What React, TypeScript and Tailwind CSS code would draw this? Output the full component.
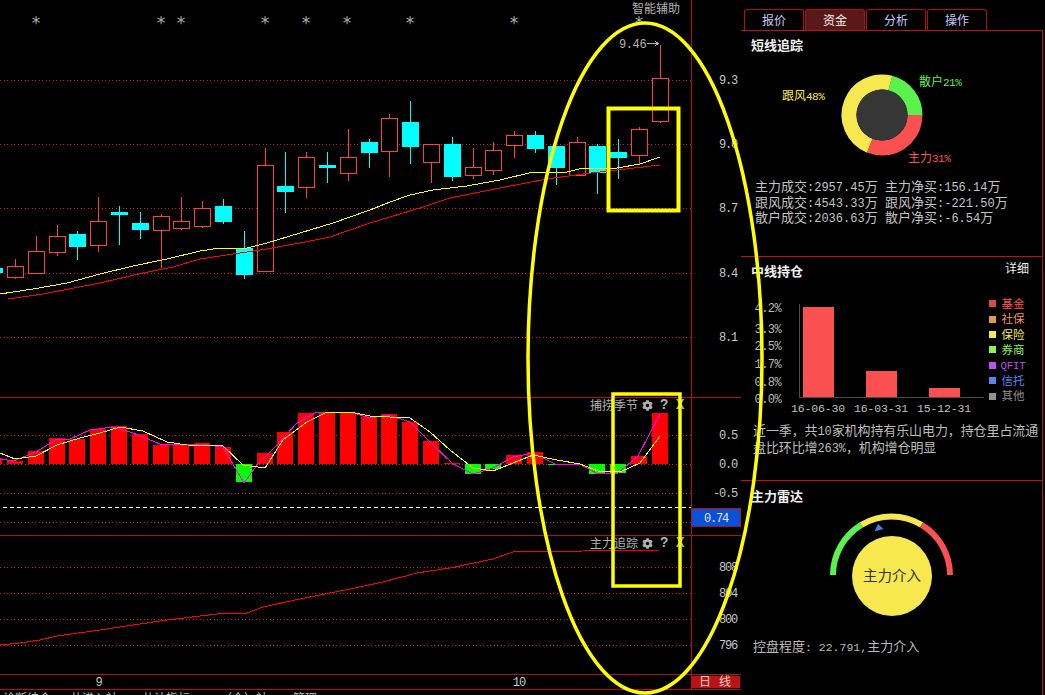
import { FaCog } from "react-icons/fa"

const cjk = "font-['Noto_Sans_CJK_SC',sans-serif]"
const mono = "font-['Liberation_Mono',monospace]"

const LINE = "#b01212"
const DOT = "#d02020"
const UP = "#ff4040"
const DOWN = "#00ffff"

type Candle = [number, "r" | "c", number, number, number, number]

// x, colour, high, body top, body bottom, low
const candles: Candle[] = [
  [-5.5, "c", 262, 268, 273, 275],
  [15.5, "r", 259, 266, 277, 279],
  [36.5, "r", 236, 251, 273, 273],
  [57.5, "r", 225, 236, 252, 256],
  [77.5, "c", 231, 234, 247, 260],
  [98.5, "r", 197, 221, 245, 252],
  [119.5, "c", 206, 212, 215, 245],
  [140.5, "c", 212, 223, 230, 239],
  [161.5, "r", 214, 216, 230, 268],
  [181.5, "r", 197, 221, 228, 230],
  [202.5, "r", 201, 208, 226, 228],
  [223.5, "c", 199, 206, 222, 224],
  [244.5, "c", 231, 248, 275, 279],
  [265.5, "r", 148, 165, 271, 271],
  [285.5, "c", 152, 186, 192, 213],
  [306.5, "r", 152, 157, 187, 198],
  [327.5, "c", 152, 165, 168, 183],
  [348.5, "r", 129, 157, 173, 181],
  [369.5, "c", 139, 142, 153, 168],
  [389.5, "r", 114, 118, 151, 177],
  [410.5, "c", 101, 122, 147, 164],
  [431.5, "r", 144, 144, 162, 183],
  [452.5, "c", 137, 144, 177, 181],
  [473.5, "r", 148, 167, 175, 179],
  [493.5, "r", 142, 150, 170, 175],
  [514.5, "r", 131, 135, 145, 158],
  [535.5, "c", 131, 135, 149, 153],
  [556.5, "c", 146, 146, 168, 185],
  [577.5, "r", 137, 142, 175, 175],
  [597.5, "c", 144, 146, 173, 194],
  [618.5, "c", 139, 152, 158, 179],
  [639.5, "r", 127, 129, 155, 164],
  [660.5, "r", 45, 78, 121, 123],
]

const barTops = [
  458, 461, 451, 438, 439, 429, 426, 434, 445, 445, 443, 447, 482, 453, 432, 413, 412, 412, 417, 414, 422, 441, 463,
  474, 469, 455, 452, 465, 464, 474, 473, 456, 413,
]

const stars = [36, 161, 181, 265, 306, 347, 410, 514, 639]

const maYellow =
  "0,294 33,289 67,283 100,274 133,266 167,259 200,251 220,248 233,248 247,248 267,243 300,233 333,223 350,217 370,210 390,202 410,195 433,190 467,186 500,180 533,172 567,172 583,168 617,168 640,164 660,157"
const maRed =
  "8,299 43,294 100,283 143,273 173,267 200,259 233,254 267,249 300,243 330,237 350,230 370,223 390,217 423,207 450,198 500,188 547,179 583,174 617,170 660,165"
const macdPink =
  "0,459 13,461 36,452 57,439 70,439 90,430 113,427 133,433 160,444 180,445 200,444 223,447 244,483 257,465 277,445 297,423 315,413 350,412 370,418 388,415 410,422 433,445 453,464 473,474 493,468 513,457 533,453 557,465 580,464 598,474 618,473 638,456 660,414"
const macdYellow =
  "0,453 15,459 36,456 57,445 80,438 100,433 120,427 143,431 167,442 187,445 223,446 243,465 265,468 283,440 307,422 325,413 350,412 370,416 390,417 410,418 430,432 450,450 473,468 493,471 533,455 557,460 580,464 598,471 620,472 640,463 660,436"
const trackLine =
  "0,645 20,643 40,640 57,636 100,630 133,625 167,620 217,614 247,613 263,607 300,599 350,589 383,582 417,573 450,568 493,559 513,552 583,551 660,550"

function Dotted({ y, to = 691 }: { y: number; to?: number }) {
  return <line x1={0} x2={to} y1={y + 0.5} y2={y + 0.5} stroke={DOT} strokeDasharray="1 2.5" />
}

function AxisLabel({ y, children }: { y: number; children: string }) {
  return (
    <text x={737} y={y + 4} textAnchor="end" fontSize={12} letterSpacing={-1.2} fill="#c8c8c8" className={mono}>
      {children}
    </text>
  )
}

function AxisLine({ from, to }: { from: number; to: number }) {
  return <line x1={691.5} x2={691.5} y1={from} y2={to} stroke={LINE} />
}

function CandleMark({ c }: { c: Candle }) {
  const [x, kind, high, top, bottom, low] = c
  const color = kind === "r" ? UP : DOWN
  return (
    <g>
      <line x1={x} x2={x} y1={high} y2={top} stroke={color} />
      <line x1={x} x2={x} y1={bottom} y2={low} stroke={color} />
      {kind === "r" ? (
        <rect x={x - 8} y={top + 0.5} width={16} height={bottom - top} fill="#000" stroke={color} />
      ) : (
        <rect x={x - 8.5} y={top} width={17} height={bottom - top} fill={color} />
      )}
    </g>
  )
}

function PriceChart() {
  return (
    <svg viewBox="0 0 741 397" className="block w-[741px] h-[397px]" shapeRendering="crispEdges">
      <AxisLine from={0} to={397} />
      {[80, 144, 208, 273, 337].map((y) => (
        <Dotted key={y} y={y} />
      ))}
      {candles.map((c) => (
        <CandleMark key={c[0]} c={c} />
      ))}
      <polyline points={maYellow} fill="none" stroke="#ffff00" />
      <polyline points={maRed} fill="none" stroke="#ff0000" />
      {stars.map((x) => (
        <text
          key={x}
          x={x}
          y={29}
          textAnchor="middle"
          fontSize={17}
          fill="#a8a8a8"
          className="font-['DejaVu_Sans',sans-serif]"
        >
          *
        </text>
      ))}
      <text x={632} y={13} fontSize={12} fill="#b4b4b4" className={cjk}>
        智能辅助
      </text>
      <text x={619} y={48} fontSize={12} letterSpacing={-0.4} fill="#b4b4b4" className={mono}>
        9.46
      </text>
      <path d="M647 43.5H658M655 41L658 43.5L655 46" fill="none" stroke="#b4b4b4" />
      <AxisLabel y={80}>9.3</AxisLabel>
      <AxisLabel y={144}>9.0</AxisLabel>
      <AxisLabel y={208}>8.7</AxisLabel>
      <AxisLabel y={273}>8.4</AxisLabel>
      <AxisLabel y={337}>8.1</AxisLabel>
    </svg>
  )
}

function IndicatorTools({ title }: { title: string }) {
  return (
    <div className={`absolute left-[590px] top-[0px] flex items-center h-[14px] text-[12px] text-[#b0b0b0] ${cjk}`}>
      <span className="w-[52px]">{title}</span>
      <FaCog className="w-[11px] h-[11px] text-[#b0b0b0]" />
      <span className={`ml-[7px] w-[9px] font-bold text-[14px] ${mono}`}>?</span>
      <span className={`ml-[7px] font-bold text-[14px] ${mono}`}>X</span>
    </div>
  )
}

function SeasonChart() {
  return (
    <svg viewBox="0 398 741 137" className="block w-[741px] h-[137px]" shapeRendering="crispEdges">
      <AxisLine from={398} to={535} />
      {[435, 464, 493, 522].map((y) => (
        <Dotted key={y} y={y} />
      ))}
      {candles.map((c, i) => {
        const top = barTops[i]
        const x = Math.floor(c[0] - 8.5)
        return top <= 464 ? (
          <rect key={c[0]} x={x} y={top} width={16} height={464 - top} fill="#ff0000" />
        ) : (
          <rect key={c[0]} x={x} y={464} width={16} height={top - 464} fill="#00ff00" />
        )
      })}
      <polyline points={macdPink} fill="none" stroke="#ff00ff" />
      <polyline points={macdYellow} fill="none" stroke="#ffff00" />
      <line x1={3} x2={691} y1={507.5} y2={507.5} stroke="#ffffff" strokeDasharray="4 3" />
      <rect x={691.5} y={508.5} width={49} height={18} fill="#0a50d8" stroke={LINE} />
      <text x={716} y={522} textAnchor="middle" fontSize={12} letterSpacing={-1.2} fill="#e8e8e8" className={mono}>
        0.74
      </text>
      <AxisLabel y={435}>0.5</AxisLabel>
      <AxisLabel y={464}>0.0</AxisLabel>
      <AxisLabel y={493}>-0.5</AxisLabel>
    </svg>
  )
}

function TrackChart() {
  return (
    <svg viewBox="0 536 741 138" className="block w-[741px] h-[138px]" shapeRendering="crispEdges">
      <AxisLine from={536} to={674} />
      {[567, 593, 619, 645].map((y) => (
        <Dotted key={y} y={y} />
      ))}
      <polyline points={trackLine} fill="none" stroke="#ff0000" />
      <AxisLabel y={567}>808</AxisLabel>
      <AxisLabel y={593}>804</AxisLabel>
      <AxisLabel y={619}>800</AxisLabel>
      <AxisLabel y={645}>796</AxisLabel>
    </svg>
  )
}

function TimeAxis() {
  return (
    <svg viewBox="0 675 741 14" className="block w-[741px] h-[14px]" shapeRendering="crispEdges">
      <AxisLine from={675} to={689} />
      <text x={99} y={686} textAnchor="middle" fontSize={12} fill="#c8c8c8" className={mono}>
        9
      </text>
      <text x={519} y={686} textAnchor="middle" fontSize={12} letterSpacing={-1} fill="#c8c8c8" className={mono}>
        10
      </text>
      <rect x={692} y={676} width={48} height={12} fill="#b81414" />
      <text x={699} y={686} fontSize={12} fill="#f0d0d0" className={cjk}>
        日
      </text>
      <text x={719} y={686} fontSize={12} fill="#f0d0d0" className={cjk}>
        线
      </text>
    </svg>
  )
}

function Mixed({ text, latin = "text-[12px]" }: { text: string; latin?: string }) {
  return (
    <>
      {text.split(/([ -~]+)/).map((part, i) =>
        i % 2 === 1 ? (
          <span key={i} className={`${mono} ${latin}`}>
            {part}
          </span>
        ) : (
          part
        ),
      )}
    </>
  )
}

function Percent({ value }: { value: string }) {
  return (
    <tspan fontSize={11} letterSpacing={-0.5} className={mono}>
      {value}
    </tspan>
  )
}

function Donut() {
  const cx = 882
  const cy = 115
  const r = 33
  const c = 2 * Math.PI * r
  // yellow, green, red shares as stroke segments, starting from the top
  const slices = [
    { color: "#f6e84e", from: 201.6, span: 172.8 },
    { color: "#5cf24e", from: 14.4, span: 75.6 },
    { color: "#fa5050", from: 90, span: 111.6 },
  ]
  return (
    <svg viewBox="741 53 301 125" className="block w-[301px] h-[125px]">
      {slices.map((s) => (
        <circle
          key={s.color}
          cx={cx}
          cy={cy}
          r={r}
          fill="none"
          stroke={s.color}
          strokeWidth={15}
          strokeDasharray={`${(s.span / 360) * c} ${c}`}
          transform={`rotate(${s.from - 90} ${cx} ${cy})`}
        />
      ))}
      <circle cx={cx} cy={cy} r={25.5} fill="#363636" />
      <text x={782} y={100} fontSize={12} fill="#f6e84e" className={cjk}>
        跟风
        <Percent value="48%" />
      </text>
      <text x={919} y={86} fontSize={12} fill="#5cf24e" className={cjk}>
        散户
        <Percent value="21%" />
      </text>
      <text x={908} y={162} fontSize={12} fill="#fa5050" className={cjk}>
        主力
        <Percent value="31%" />
      </text>
    </svg>
  )
}

const flows = [
  ["主力成交:2957.45万", "主力净买:156.14万"],
  ["跟风成交:4543.33万", "跟风净买:-221.50万"],
  ["散户成交:2036.63万", "散户净买:-6.54万"],
]

const holdings = [
  { label: "16-06-30", x: 803, top: 307, cx: 818 },
  { label: "16-03-31", x: 866, top: 371, cx: 881 },
  { label: "15-12-31", x: 929, top: 388, cx: 944 },
]

const scale = [
  { label: "4.2%", y: 308 },
  { label: "3.3%", y: 329 },
  { label: "2.5%", y: 346 },
  { label: "1.7%", y: 364 },
  { label: "0.8%", y: 382 },
  { label: "0.0%", y: 399 },
]

const legend = [
  { label: "基金", square: "bg-[#d84a4a]", text: "text-[#ff5050]" },
  { label: "社保", square: "bg-[#e09a50]", text: "text-[#f09a50]" },
  { label: "保险", square: "bg-[#f6e84e]", text: "text-[#f6e84e]" },
  { label: "券商", square: "bg-[#90f050]", text: "text-[#90f050]" },
  { label: "QFIT", square: "bg-[#c050f0]", text: "text-[#c050f0]" },
  { label: "信托", square: "bg-[#6080f0]", text: "text-[#6080f0]" },
  { label: "其他", square: "bg-[#909090]", text: "text-[#909090]" },
]

function HoldingChart() {
  return (
    <svg viewBox="741 296 244 120" className="block w-[244px] h-[120px] shrink-0" shapeRendering="crispEdges">
      <path d="M799.5 304V397.5H984" fill="none" stroke="#4a4a4a" />
      {holdings.map((h) => (
        <g key={h.label}>
          <rect x={h.x} y={h.top} width={31} height={397 - h.top} fill="#fa5050" />
          <text x={h.cx} y={412} textAnchor="middle" fontSize={11.5} letterSpacing={-0.15} fill="#c0c0c0" className={mono}>
            {h.label}
          </text>
        </g>
      ))}
      {scale.map((s) => (
        <text
          key={s.label}
          x={781}
          y={s.y + 4}
          textAnchor="end"
          fontSize={12}
          letterSpacing={-0.6}
          fill="#b8b8b8"
          className={mono}
        >
          {s.label}
        </text>
      ))}
    </svg>
  )
}

function Gauge() {
  const cx = 891.5
  const cy = 576
  const r = 58.5
  const point = (deg: number) => {
    const a = (deg * Math.PI) / 180
    return `${cx + r * Math.sin(a)} ${cy - r * Math.cos(a)}`
  }
  const arc = (from: number, to: number) => `M${point(from)}A${r} ${r} 0 0 1 ${point(to)}`
  return (
    <svg viewBox="741 505 301 125" className="block w-[301px] h-[125px]">
      <path d={arc(-90, -31)} fill="none" stroke="#5cf24e" strokeWidth={6} />
      <path d={arc(-31, 31)} fill="none" stroke="#f6e84e" strokeWidth={6} />
      <path d={arc(31, 90)} fill="none" stroke="#fa5050" strokeWidth={6} />
      <polygon points="878,525 883.5,530 874.5,532.5" fill="#4080f0" />
      <circle cx={892} cy={577} r={40} fill="#f6e84e" />
      <text x={892} y={582} textAnchor="middle" fontSize={14.5} fill="#333333" className={cjk}>
        主力介入
      </text>
    </svg>
  )
}

const tabs = ["报价", "资金", "分析", "操作"]

function SidePanel() {
  return (
    <div className={`w-[302px] h-[695px] shrink-0 ${cjk}`}>
      <div className="h-[31px] border-b border-[#c01010] flex items-end pl-[3px] gap-px">
        {tabs.map((t) => (
          <div
            key={t}
            className={`w-[60px] h-[21px] border border-b-0 border-[#b01010] rounded-t-[3px] flex items-center justify-center text-[12px] ${
              t === "资金" ? "bg-[#5a1818] text-[#f4f4f4]" : "text-[#c8c8ff]"
            }`}
          >
            {t}
          </div>
        ))}
      </div>

      <div className="h-[664px] border-r border-[#c01010]">
        <section className="h-[226px] border-b border-[#c01010]">
          <h2 className="pl-[10px] pt-[6px] text-[13px] leading-[16px] font-bold text-[#f0f0f0]">短线追踪</h2>
          <Donut />
          <div className="pl-[14px] grid grid-cols-[130px_1fr] text-[13px] leading-[15.5px] text-[#c4c4c4]">
            {flows.flat().map((line) => (
              <span key={line} className="block h-[15.5px] whitespace-nowrap">
                <Mixed text={line} />
              </span>
            ))}
          </div>
        </section>

        <section className="h-[224px] border-b border-[#c01010]">
          <div className="flex justify-between items-start pl-[10px] pr-[13px]">
            <h2 className="pt-[6px] text-[13px] leading-[16px] font-bold text-[#f0f0f0]">中线持仓</h2>
            <span className="pt-[3px] text-[12px] leading-[16px] text-[#f0f0f0]">详细</span>
          </div>
          <div className="mt-[17px] flex">
            <HoldingChart />
            <ul className="ml-[4px]">
              {legend.map((item) => (
                <li key={item.label} className="flex items-center h-[15.4px]">
                  <span className={`w-[7px] h-[7px] ${item.square}`} />
                  <span className={`ml-[2px] w-[30px] text-center text-[11.5px] ${item.text}`}>
                    <Mixed text={item.label} latin="text-[10.5px]" />
                  </span>
                </li>
              ))}
            </ul>
          </div>
          <div className="pl-[12px] mt-[5px] text-[13px] leading-[17px] tracking-[-0.1px] text-[#bcbcbc] whitespace-nowrap">
            <p className="h-[17px]">
              近一季，共<Mixed text="10" />家机构持有乐山电力，持仓里占流通
            </p>
            <p className="h-[17px]">
              盘比环比增<Mixed text="263%" />，机构增仓明显
            </p>
          </div>
        </section>

        <section>
          <h2 className="pl-[10px] pt-[7px] text-[13px] leading-[16px] font-bold text-[#f0f0f0]">主力雷达</h2>
          <Gauge />
          <p className="pl-[12px] mt-[8px] h-[17px] text-[13px] leading-[17px] text-[#bcbcbc] whitespace-nowrap">
            控盘程度
            <Mixed text=": 22.791," latin="text-[11.5px]" />
            主力介入
          </p>
        </section>
      </div>
    </div>
  )
}

// Status row under the chart; only its upper edge fits in the window
function StatusRow() {
  return (
    <div className={`h-[5px] pt-[2px] overflow-hidden flex text-[12px] leading-[12px] text-[#b8b8b8] ${cjk}`}>
      <span className="ml-[3px] w-[67px]">诊断结合</span>
      <span className="w-[72px]">共进入社</span>
      <span className="w-[78px]">共认指标</span>
      <span className="w-[73px]">（个）社</span>
      <span>管理</span>
    </div>
  )
}

export default function App() {
  return (
    <div className="relative w-[1045px] h-[695px] bg-black overflow-hidden flex">
      <div className="w-[741px] shrink-0 flex flex-col">
        <div className="h-[398px] border-b border-[#b01212]">
          <PriceChart />
        </div>
        <div className="relative h-[138px] border-b border-[#b01212]">
          <SeasonChart />
          <IndicatorTools title="捕捞季节" />
        </div>
        <div className="relative h-[139px] border-b border-[#b01212]">
          <TrackChart />
          <IndicatorTools title="主力追踪" />
        </div>
        <div className="h-[15px] border-b border-[#b01212]">
          <TimeAxis />
        </div>
        <StatusRow />
      </div>
      <SidePanel />

      {/* hand-drawn yellow highlight marks over the whole window */}
      <svg viewBox="0 0 1045 695" className="absolute inset-0 w-[1045px] h-[695px] pointer-events-none" fill="none">
        <ellipse cx={645} cy={358} rx={117} ry={335} stroke="#ffff00" strokeWidth={3.5} />
        <rect x={608.5} y={108.5} width={70} height={102} stroke="#ffff00" strokeWidth={4} />
        <rect x={613} y={394} width={67} height={192} stroke="#ffff00" strokeWidth={3.5} />
      </svg>
    </div>
  )
}
